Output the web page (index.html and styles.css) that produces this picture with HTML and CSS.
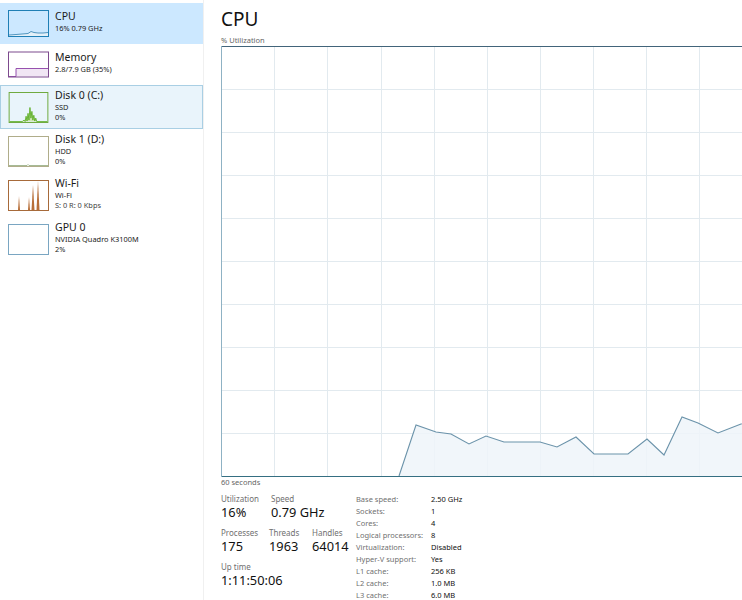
FILE: index.html
```html
<!DOCTYPE html>
<html>
<head>
<meta charset="utf-8">
<link rel="stylesheet" href="styles.css">
</head>
<body>
<div class="app">
  <aside class="sidebar">
    <div class="item selected two">
      <svg class="thumb t2" viewBox="0 0 41 27">
        <polygon points="1,26 1,25 8,24.5 14,24 20,23.5 23,21.5 26,22.5 30,23 35,23 40,22.5 40,26" fill="#e4f0f8"/>
        <polyline points="1,25 8,24.5 14,24 20,23.5 23,21.5 26,22.5 30,23 35,23 40,22.5" fill="none" stroke="#2f7fae" stroke-width="0.8"/>
        <rect x="0.5" y="0.5" width="40" height="26" fill="none" stroke="#1f7fb5"/>
      </svg>
      <div class="txt">
        <div class="name">CPU</div>
        <div class="sub">16% 0.79 GHz</div>
      </div>
    </div>
    <div class="item two">
      <svg class="thumb t2" viewBox="0 0 41 26">
        <polygon points="8,25 8,17 40,17 40,25" fill="#f1e6f4"/>
        <polyline points="1,25 8,25 8,17 40,17" fill="none" stroke="#8b3ea6" stroke-width="0.9"/>
        <rect x="0.5" y="0.5" width="40" height="25" fill="none" stroke="#7d4a8e"/>
      </svg>
      <div class="txt">
        <div class="name">Memory</div>
        <div class="sub">2.8/7.9 GB (35%)</div>
      </div>
    </div>
    <div class="item hover three">
      <svg class="thumb t3" viewBox="0 0 41 32">
        <polyline points="1,30.5 14,30.5 16,29 17,30.5 18,25 19,30 20,22 21,29 22,16 23,27 24,20 25,29 26,24 27,30 28,27 29,30.5 40,30.5" fill="#cfe6b8" stroke="#4da60c" stroke-width="0.8"/>
        <rect x="0.5" y="0.5" width="40" height="31" fill="none" stroke="#6ca83a"/>
      </svg>
      <div class="txt">
        <div class="name">Disk 0 (C:)</div>
        <div class="sub">SSD</div>
        <div class="sub">0%</div>
      </div>
    </div>
    <div class="item three">
      <svg class="thumb t3" viewBox="0 0 41 31">
        <polyline points="1,29.5 19,29.5 20,28.5 21,29.5 40,29.5" fill="none" stroke="#8fa87a" stroke-width="0.8"/>
        <rect x="0.5" y="0.5" width="40" height="30" fill="none" stroke="#b0ad8a"/>
      </svg>
      <div class="txt">
        <div class="name">Disk 1 (D:)</div>
        <div class="sub">HDD</div>
        <div class="sub">0%</div>
      </div>
    </div>
    <div class="item three">
      <svg class="thumb t3" viewBox="0 0 41 31">
        <polygon points="10,30 11,16 12,30" fill="#b8703a"/>
        <polygon points="20,30 21,17 22,30" fill="#b8703a"/>
        <polygon points="23.5,30 25,5 26.5,30" fill="#b8703a"/>
        <polygon points="28.5,30 30,1 31.5,30" fill="#b8703a"/>
        <rect x="0.5" y="0.5" width="40" height="30" fill="none" stroke="#a76a3a"/>
      </svg>
      <div class="txt">
        <div class="name">Wi-Fi</div>
        <div class="sub">Wi-Fi</div>
        <div class="sub muted">S: 0 R: 0 Kbps</div>
      </div>
    </div>
    <div class="item three">
      <svg class="thumb t3" viewBox="0 0 41 31">
        <rect x="0.5" y="0.5" width="40" height="30" fill="none" stroke="#7aa6c2"/>
      </svg>
      <div class="txt">
        <div class="name">GPU 0</div>
        <div class="sub">NVIDIA Quadro K3100M</div>
        <div class="sub">2%</div>
      </div>
    </div>
  </aside>
  <main class="main">
    <h1 class="title">CPU</h1>
    <div class="axis-label">% Utilization</div>
    <svg class="chart" width="540" height="431" viewBox="0 0 540 431">
      <g stroke="#e2eaef" stroke-width="1">
        <line x1="0" y1="43.5" x2="540" y2="43.5"/>
        <line x1="0" y1="86.5" x2="540" y2="86.5"/>
        <line x1="0" y1="129.5" x2="540" y2="129.5"/>
        <line x1="0" y1="172.5" x2="540" y2="172.5"/>
        <line x1="0" y1="215.5" x2="540" y2="215.5"/>
        <line x1="0" y1="258.5" x2="540" y2="258.5"/>
        <line x1="0" y1="301.5" x2="540" y2="301.5"/>
        <line x1="0" y1="344.5" x2="540" y2="344.5"/>
        <line x1="0" y1="387.5" x2="540" y2="387.5"/>
        <line x1="53.5" y1="0" x2="53.5" y2="431"/>
        <line x1="106.5" y1="0" x2="106.5" y2="431"/>
        <line x1="160.5" y1="0" x2="160.5" y2="431"/>
        <line x1="213.5" y1="0" x2="213.5" y2="431"/>
        <line x1="266.5" y1="0" x2="266.5" y2="431"/>
        <line x1="319.5" y1="0" x2="319.5" y2="431"/>
        <line x1="372.5" y1="0" x2="372.5" y2="431"/>
        <line x1="425.5" y1="0" x2="425.5" y2="431"/>
        <line x1="478.5" y1="0" x2="478.5" y2="431"/>
      </g>
      <polygon points="178,430 195,379 215,386 230,388 248,398 265,390 283,396 319,396 336,401 355,391 373,408 407,408 426,393 443,409 461,371 477,377 497,387 520,378 540,372 540,430" fill="#eef4f9" fill-opacity="0.85"/>
      <polyline points="178,430 195,379 215,386 230,388 248,398 265,390 283,396 319,396 336,401 355,391 373,408 407,408 426,393 443,409 461,371 477,377 497,387 520,378 540,372" fill="none" stroke="#6b93aa" stroke-width="1.1"/>
      <line x1="0" y1="0.5" x2="540" y2="0.5" stroke="#42647a"/>
      <line x1="0" y1="430.5" x2="540" y2="430.5" stroke="#356f82"/>
      <line x1="0.5" y1="0" x2="0.5" y2="431" stroke="#8fb2c4"/>
    </svg>
    <div class="axis-label seconds">60 seconds</div>
    <section class="stats">
      <div class="left">
        <div class="row">
          <div class="stat w50"><div class="lbl">Utilization</div><div class="val">16%</div></div>
          <div class="stat"><div class="lbl">Speed</div><div class="val">0.79 GHz</div></div>
        </div>
        <div class="row">
          <div class="stat w48"><div class="lbl">Processes</div><div class="val">175</div></div>
          <div class="stat w43"><div class="lbl">Threads</div><div class="val">1963</div></div>
          <div class="stat"><div class="lbl">Handles</div><div class="val">64014</div></div>
        </div>
        <div class="row">
          <div class="stat"><div class="lbl">Up time</div><div class="val">1:11:50:06</div></div>
        </div>
      </div>
      <div class="specs">
        <div class="spec"><span class="k">Base speed:</span><span class="v">2.50 GHz</span></div>
        <div class="spec"><span class="k">Sockets:</span><span class="v">1</span></div>
        <div class="spec"><span class="k">Cores:</span><span class="v">4</span></div>
        <div class="spec"><span class="k">Logical processors:</span><span class="v">8</span></div>
        <div class="spec"><span class="k">Virtualization:</span><span class="v">Disabled</span></div>
        <div class="spec"><span class="k">Hyper-V support:</span><span class="v">Yes</span></div>
        <div class="spec"><span class="k">L1 cache:</span><span class="v">256 KB</span></div>
        <div class="spec"><span class="k">L2 cache:</span><span class="v">1.0 MB</span></div>
        <div class="spec"><span class="k">L3 cache:</span><span class="v">6.0 MB</span></div>
      </div>
    </section>
  </main>
</div>
</body>
</html>
```

FILE: styles.css
```css
html, body {
  margin: 0;
  padding: 0;
  background: #ffffff;
  overflow: hidden;
  width: 742px;
  height: 600px;
}
body {
  font-family: "Noto Sans", "Open Sans", sans-serif;
  color: #000;
}
.app {
  display: flex;
  height: 600px;
}
.sidebar {
  width: 204px;
  flex: none;
  border-right: 1px solid #f0f0f0;
  padding-top: 3px;
  box-sizing: border-box;
}
.item {
  display: flex;
  align-items: center;
  width: 203px;
  box-sizing: border-box;
  padding-left: 8px;
  border: 1px solid transparent;
  border-left: none;
}
.item.two { height: 41px; }
.item.three { height: 44px; }
.item.selected {
  background: #cce8ff;
  border-color: #cce8ff;
}
.item.hover {
  background: #e9f4fb;
  border: 1px solid #a9cfe4;
  border-left: 1px solid #a9cfe4;
  padding-left: 7px;
}
.thumb {
  flex: none;
  width: 41px;
  display: block;
}
.thumb.t2 { height: 27px; }
.t3 { height: 31px; }
.txt {
  margin-left: 6px;
  margin-bottom: 3px;
}
.two .txt {
  margin-bottom: 4px;
}
.name {
  font-size: 10.5px;
  line-height: 12px;
  margin-bottom: 1px;
  color: #1a1a1a;
}
.sub {
  font-size: 7.4px;
  line-height: 10px;
  color: #222;
}
.sub.muted {
  color: #444;
}
.main {
  flex: 1;
  padding-left: 17px;
  padding-top: 8px;
  min-width: 0;
}
.title {
  margin: 0;
  font-size: 19px;
  line-height: 23px;
  font-weight: 400;
  color: #111;
}
.axis-label {
  font-size: 7.5px;
  line-height: 10px;
  color: #666;
  margin-top: 4px;
  margin-bottom: 1px;
}
.chart {
  display: block;
}
.axis-label.seconds {
  margin-top: 0;
  margin-bottom: 0;
}
.stats {
  display: flex;
  margin-top: 6px;
}
.left {
  width: 135px;
  flex: none;
}
.row {
  display: flex;
  margin-bottom: 6px;
}
.stat { flex: none; }
.w50 { width: 50px; }
.w48 { width: 48px; }
.w43 { width: 43px; }
.lbl {
  font-size: 8px;
  line-height: 11px;
  color: #707070;
}
.val {
  font-size: 12.8px;
  line-height: 17px;
  color: #111;
}
.spec {
  display: flex;
  font-size: 7.5px;
  line-height: 12px;
}
.spec .k {
  width: 75px;
  color: #707070;
}
.spec .v {
  color: #111;
}
```
